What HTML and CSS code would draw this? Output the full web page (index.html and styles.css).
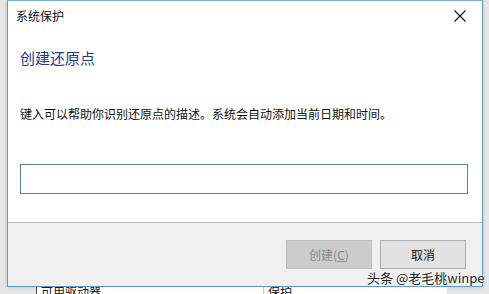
FILE: index.html
```html
<!DOCTYPE html>
<html lang="zh-CN">
<head>
    <meta charset="UTF-8">
    <title>系统保护</title>
    <link rel="stylesheet" href="styles.css">
</head>
<body>
    <!-- Dialog window -->
    <div class="dialog">
        <div class="titlebar">
            <span class="title">系统保护</span>
            <svg class="close" width="12" height="12" viewBox="0 0 12 12">
                <path d="M0.5 0.5 L11.5 11.5 M11.5 0.5 L0.5 11.5" stroke="#111" stroke-width="1.1" fill="none"/>
            </svg>
        </div>
        <div class="content">
            <div class="heading">创建还原点</div>
            <p class="desc">键入可以帮助你识别还原点的描述。系统会自动添加当前日期和时间。</p>
            <input class="field" type="text">
        </div>
        <div class="footer">
            <button class="btn" disabled>创建(<u>C</u>)</button>
            <button class="btn">取消</button>
        </div>
    </div>

    <!-- Window behind the dialog -->
    <div class="behind">
        <span class="col first">可用驱动器</span>
        <span class="col second">保护</span>
    </div>

    <div class="watermark">头条 @老毛桃winpe</div>
</body>
</html>
```

FILE: styles.css
```css
body {
    margin: 0;
    width: 489px;
    height: 294px;
    overflow: hidden;
    background-color: #e6e6e6;
    font-family: "Noto Sans CJK SC", "Microsoft YaHei", sans-serif;
    color: #111;
    position: relative;
}

.dialog {
    display: flex;
    flex-direction: column;
    width: 474px;
    height: 285px;
    margin-left: 7px;
    background-color: #fff;
    border: 1px solid #5b97c9; /* accent border */
    border-top-color: #7ab0d6;
    box-shadow: 0 0 4px rgba(0, 0, 0, 0.15);
}

.titlebar {
    display: flex;
    align-items: center;
    justify-content: space-between;
    height: 30px;
    padding: 0 16px 0 8px;
    font-size: 12px;
}

.title {
    line-height: 16px;
    margin-top: 0;
}

.close {
    display: block;
}

.content {
    flex: 1;
    padding: 0 14px 0 12px;
}

.heading {
    margin-top: 17px;
    font-size: 15px;
    line-height: 20px;
    color: #1e3c8c; /* main instruction blue */
}

.desc {
    margin: 38px 0 0;
    font-size: 12px;
    line-height: 16px;
}

.field {
    display: block;
    box-sizing: border-box;
    width: 448px;
    height: 30px;
    margin-top: 42px;
    border: 1px solid #587e92;
    outline: none;
    background-color: #fff;
}

.footer {
    display: flex;
    justify-content: flex-end;
    gap: 8px;
    height: 64px;
    padding: 17px 16px 0 0;
    box-sizing: border-box;
    background-color: #f0f0f0;
    border-top: 1px solid #b9b9b9;
}

.btn {
    width: 86px;
    height: 29px;
    font-family: inherit;
    font-size: 12px;
    color: #111;
    background-color: #e1e1e1;
    border: 1px solid #adadad;
}

.btn:disabled {
    color: #8a8a8a;
    background-color: #cccccc;
    border-color: #bfbfbf;
}

.btn u {
    text-decoration: underline;
}

/* strip of the window underneath */
.behind {
    display: flex;
    height: 7px;
    margin-left: 36px;
    width: 410px;
    background-color: #fff;
    border-left: 1px solid #444;
    overflow: hidden;
    font-size: 12px;
    line-height: 12px;
}

.col {
    display: block;
    margin-top: -1px;
}

.first {
    padding-left: 4px;
    width: 222px;
    border-right: 1px solid #ccc;
}

.second {
    padding-left: 4px;
}

/* watermark over the bottom-right corner */
.watermark {
    position: absolute;
    left: 367px;
    top: 270px;
    font-size: 13px;
    line-height: 16px;
    color: #222;
    text-shadow: 0 0 2px #fff, 0 0 2px #fff;
}
```
